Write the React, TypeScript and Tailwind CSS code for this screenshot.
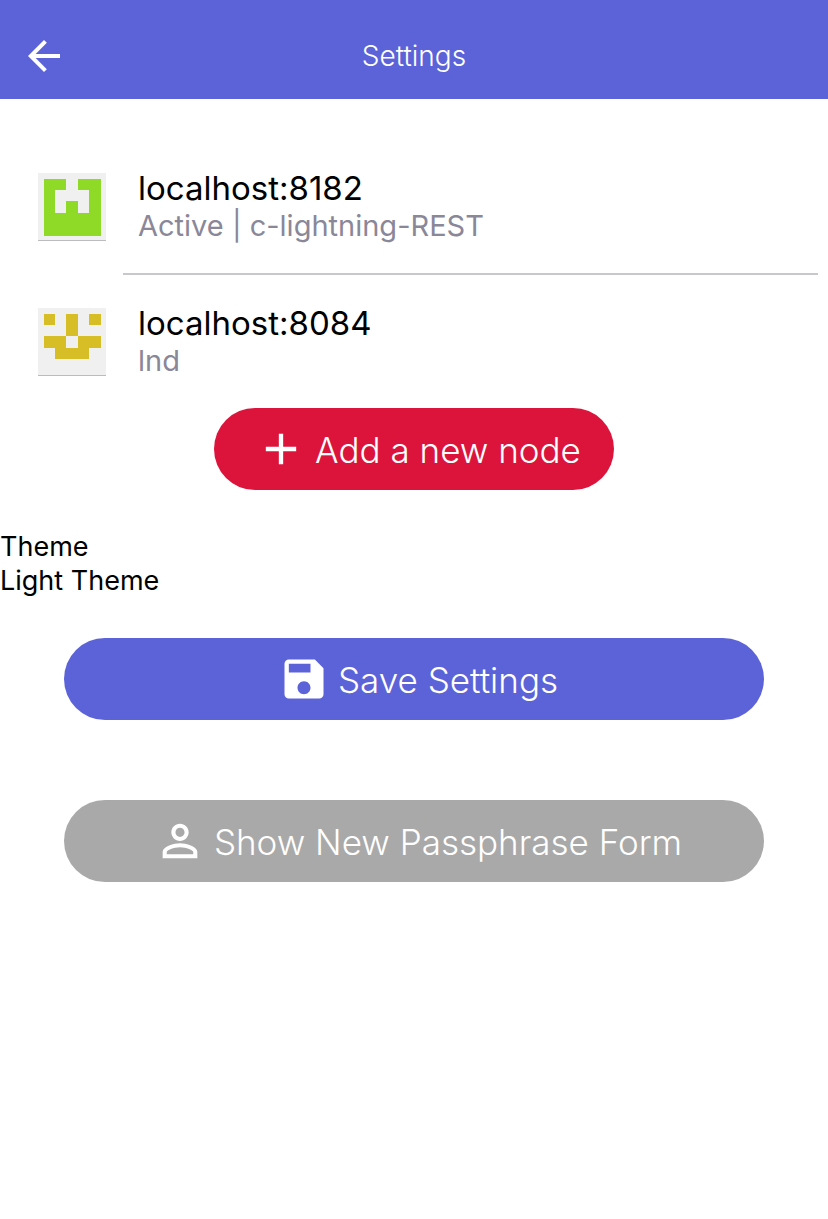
import { useState } from 'react';
import type { ReactNode } from 'react';

type Node = {
  host: string;
  detail: string;
  color: string;
  cells: string[];
};

const nodes: Node[] = [
  {
    host: 'localhost:8182',
    detail: 'Active | c-lightning-REST',
    color: '#8eda26',
    cells: ['11011', '10001', '10101', '11111', '11111'],
  },
  {
    host: 'localhost:8084',
    detail: 'lnd',
    color: '#d8be26',
    cells: ['10101', '00100', '11011', '01110', '00000'],
  },
];

const icons = {
  back: 'M20 11H7.83l5.59-5.59L12 4l-8 8 8 8 1.41-1.41L7.83 13H20v-2z',
  add: 'M19 13h-6v6h-2v-6H5v-2h6V5h2v6h6v2z',
  save: 'M17 3H5c-1.11 0-2 .9-2 2v14c0 1.1.89 2 2 2h14c1.1 0 2-.9 2-2V7l-4-4zm-5 16c-1.66 0-3-1.34-3-3s1.34-3 3-3 3 1.34 3 3-1.34 3-3 3zm3-10H5V5h10v4z',
  person:
    'M12 5.9c1.16 0 2.1.94 2.1 2.1s-.94 2.1-2.1 2.1S9.9 9.16 9.9 8s.94-2.1 2.1-2.1m0 9c2.97 0 6.1 1.46 6.1 2.1v1.1H5.9V17c0-.64 3.13-2.1 6.1-2.1M12 4C9.79 4 8 5.79 8 8s1.79 4 4 4 4-1.79 4-4-1.79-4-4-4zm0 9c-2.67 0-8 1.34-8 4v3h16v-3c0-2.66-5.33-4-8-4z',
};

function Icon({ path, className }: { path: string; className: string }) {
  return (
    <svg viewBox="0 0 24 24" fill="currentColor" aria-hidden="true" className={`shrink-0 ${className}`}>
      <path d={path} />
    </svg>
  );
}

function Identicon({ color, cells }: { color: string; cells: string[] }) {
  return (
    <svg viewBox="0 0 68 67" aria-hidden="true" className="h-[68px] w-[68px] shrink-0 border-b border-[#bcbbc1] bg-[#f0f0f0]">
      <g fill={color} shapeRendering="crispEdges">
        {cells.flatMap((row, y) =>
          row.split('').map((cell, x) =>
            cell === '1' ? (
              <rect key={`${x}-${y}`} x={5.5 + x * 11.4} y={5.5 + y * 11.4} width={11.4} height={11.4} />
            ) : null,
          ),
        )}
      </g>
    </svg>
  );
}

function PillButton({ icon, className, children }: { icon: string; className: string; children: ReactNode }) {
  return (
    <button
      type="button"
      className={`flex h-[82px] items-center justify-center gap-2 rounded-full pl-2 text-[35px] leading-10 font-light text-white ${className}`}
    >
      <Icon path={icon} className="size-[52px]" />
      <span className="pt-0.5">{children}</span>
    </button>
  );
}

export default function App() {
  const [theme, setTheme] = useState('light');

  return (
    <div className="min-h-screen bg-white font-['Inter',sans-serif] text-black">
      <header className="grid h-[99px] grid-cols-[1fr_auto_1fr] items-center bg-[#5c63d8] px-5 pt-3 text-white">
        <button type="button" aria-label="Back" className="size-12">
          <Icon path={icons.back} className="size-12" />
        </button>
        <h1 className="text-[28px] leading-8 font-light">Settings</h1>
      </header>

      <main className="pt-[41px]">
        <ul>
          {nodes.map((node, index) => (
            <li key={node.host} className="flex items-start pl-[38px]">
              <div className="pt-[33px]">
                <Identicon color={node.color} cells={node.cells} />
              </div>
              <a
                href="#node"
                className={`mr-[10px] ml-[17px] box-content flex h-[133px] flex-1 flex-col justify-center pl-[15px] ${
                  index < nodes.length - 1 ? 'border-b-2 border-[#c8c7cc]' : ''
                }`}
              >
                <span className="text-[33px] leading-[38px]">{node.host}</span>
                <span className="text-[29px] leading-[38px] text-[#8a8799]">{node.detail}</span>
              </a>
            </li>
          ))}
        </ul>

        <PillButton icon={icons.add} className="mx-auto w-[400px] bg-[#dc143c]">
          Add a new node
        </PillButton>

        <div className="mt-10 flex flex-col items-start text-[27px] leading-[34px]">
          <label htmlFor="theme">Theme</label>
          <select
            id="theme"
            value={theme}
            onChange={(event) => setTheme(event.target.value)}
            className="h-[34px] appearance-none bg-transparent p-0"
          >
            <option value="light">Light Theme</option>
            <option value="dark">Dark Theme</option>
          </select>
        </div>

        <div className="flex flex-col gap-20 px-16 pt-10">
          <PillButton icon={icons.save} className="bg-[#5c63d8]">
            Save Settings
          </PillButton>
          <PillButton icon={icons.person} className="bg-[#a9a9a9]">
            Show New Passphrase Form
          </PillButton>
        </div>
      </main>
    </div>
  );
}
